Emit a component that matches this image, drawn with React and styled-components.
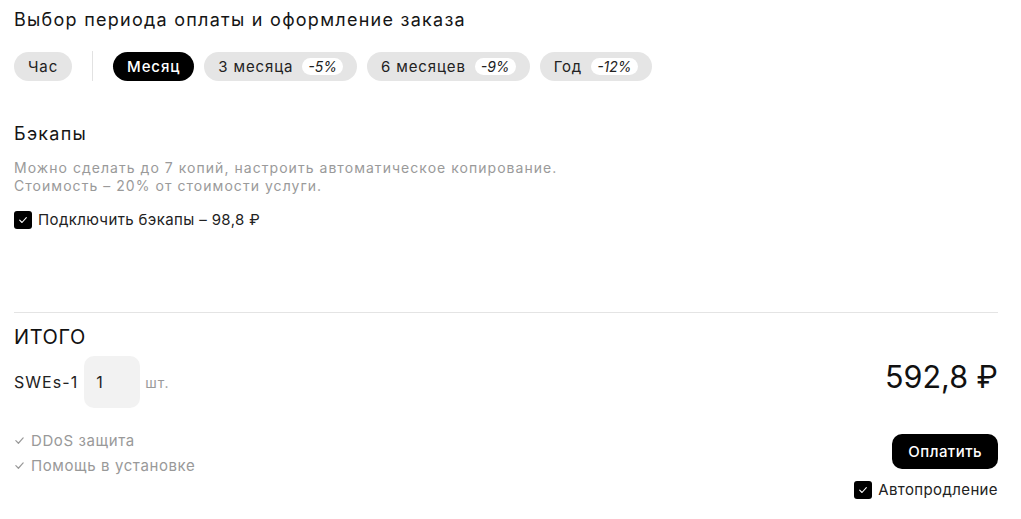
import styled, { createGlobalStyle } from "styled-components";

const GlobalStyle = createGlobalStyle`
  body {
    margin: 0;
    background: #fff;
    font-family: Inter, "Noto Sans", sans-serif;
    letter-spacing: 0.065em;
    color: #111;
  }
`;

const periods = [
  { label: 'Месяц', active: true },
  { label: '3 месяца', discount: '-5%' },
  { label: '6 месяцев', discount: '-9%' },
  { label: 'Год', discount: '-12%' },
];

function CheckIcon({ size = 10 }) {
  return (
    <svg width={size} height={size} viewBox="0 0 12 12" fill="none">
      <path d="M2 6.2L4.8 9L10 3.2" stroke="currentColor" strokeWidth="1.3" strokeLinecap="round" strokeLinejoin="round" />
    </svg>
  );
}

function Checkbox({ children, $top }) {
  return (
    <CheckRow $top={$top}>
      <Box><CheckIcon /></Box>
      <span>{children}</span>
    </CheckRow>
  );
}

function App() {
  return (
    <Page>
      <GlobalStyle />
      <Title>Выбор периода оплаты и оформление заказа</Title>
      <Pills>
        <Pill>Час</Pill>
        <Divider />
        {periods.map((p) => (
          <Pill key={p.label} $active={p.active}>
            {p.label}
            {p.discount && <Badge>{p.discount}</Badge>}
          </Pill>
        ))}
      </Pills>

      <Section>
        <Title>Бэкапы</Title>
        <Description>
          Можно сделать до 7 копий, настроить автоматическое копирование.<br />
          Стоимость – 20% от стоимости услуги.
        </Description>
        <Checkbox $top={15}>Подключить бэкапы – 98,8 ₽</Checkbox>
      </Section>

      <Total>
        <LeftCol>
          <TotalTitle>ИТОГО</TotalTitle>
          <ProductRow>
            <span>SWEs-1</span>
            <Qty>1</Qty>
            <Unit>шт.</Unit>
          </ProductRow>
          <Features>
            <Feature><CheckIcon size={11} />DDoS защита</Feature>
            <Feature><CheckIcon size={11} />Помощь в установке</Feature>
          </Features>
        </LeftCol>
        <RightCol>
          <Price>592,8 ₽</Price>
          <PayButton>Оплатить</PayButton>
          <Checkbox $top={11}>Автопродление</Checkbox>
        </RightCol>
      </Total>
    </Page>
  );
}

export default App;

const Page = styled.div`
  padding: 9px 23px 0 14px;
  width: 984px;
`;

const Title = styled.div`
  font-size: 18px;
  line-height: 22px;
  letter-spacing: 0.07em;
  color: #151515;
`;

const Pills = styled.div`
  display: flex;
  align-items: center;
  gap: 10px;
  margin-top: 20px;
`;

const Pill = styled.div`
  display: flex;
  align-items: center;
  height: 29px;
  padding: 0 14px;
  border-radius: 15px;
  font-size: 15px;
  letter-spacing: 0.058em;
  background: ${(p) => (p.$active ? '#000' : '#e5e5e5')};
  color: ${(p) => (p.$active ? '#fff' : '#222')};
  font-weight: ${(p) => (p.$active ? 500 : 400)};
`;

const Badge = styled.span`
  margin-left: 9px;
  background: #fff;
  border-radius: 9px;
  padding: 0 6px;
  height: 17px;
  line-height: 17px;
  font-size: 14px;
  font-style: italic;
  letter-spacing: 0;
  color: #222;
`;

const Divider = styled.div`
  width: 1px;
  height: 30px;
  background: #e2e2e2;
  margin: 0 10px;
`;

const Section = styled.div`
  margin-top: 42px;
`;

const Description = styled.div`
  margin-top: 14px;
  font-size: 14px;
  line-height: 18px;
  color: #9a9a9a;
`;

const CheckRow = styled.div`
  display: flex;
  align-items: center;
  gap: 6px;
  margin-top: ${(p) => p.$top || 0}px;
  font-size: 15px;
  letter-spacing: 0.025em;
  color: #222;
`;

const Box = styled.span`
  width: 18px;
  height: 18px;
  border-radius: 3px;
  background: #000;
  color: #fff;
  display: flex;
  align-items: center;
  justify-content: center;
  flex-shrink: 0;
`;

const Total = styled.div`
  margin-top: 83px;
  border-top: 1px solid #e4e4e4;
  padding-top: 12px;
  display: flex;
  justify-content: space-between;
`;

const LeftCol = styled.div`
  display: flex;
  flex-direction: column;
`;

const TotalTitle = styled.div`
  font-size: 20px;
  line-height: 24px;
  letter-spacing: 0.03em;
  color: #111;
`;

const ProductRow = styled.div`
  display: flex;
  align-items: center;
  margin-top: 7px;
  font-size: 16px;
  color: #222;
`;

const Qty = styled.div`
  width: 56px;
  height: 52px;
  margin-left: 6px;
  border-radius: 10px;
  background: #f2f2f2;
  box-sizing: border-box;
  padding-left: 12px;
  display: flex;
  align-items: center;
`;

const Unit = styled.span`
  margin-left: 5px;
  font-size: 14px;
  color: #9a9a9a;
`;

const Features = styled.div`
  margin-top: 20px;
  display: flex;
  flex-direction: column;
`;

const Feature = styled.div`
  display: flex;
  align-items: center;
  gap: 6px;
  font-size: 15px;
  line-height: 25px;
  letter-spacing: 0.04em;
  color: #999;
`;

const RightCol = styled.div`
  display: flex;
  flex-direction: column;
  align-items: flex-end;
  padding-top: 32px;
`;

const Price = styled.div`
  font-size: 30.5px;
  line-height: 40px;
  letter-spacing: 0;
  color: #111;
`;

const PayButton = styled.button`
  margin-top: 37px;
  height: 35px;
  padding: 0 16px;
  border: none;
  border-radius: 10px;
  background: #000;
  color: #fff;
  font-family: inherit;
  letter-spacing: 0.03em;
  font-size: 15px;
  font-weight: 500;
  cursor: pointer;
`;
